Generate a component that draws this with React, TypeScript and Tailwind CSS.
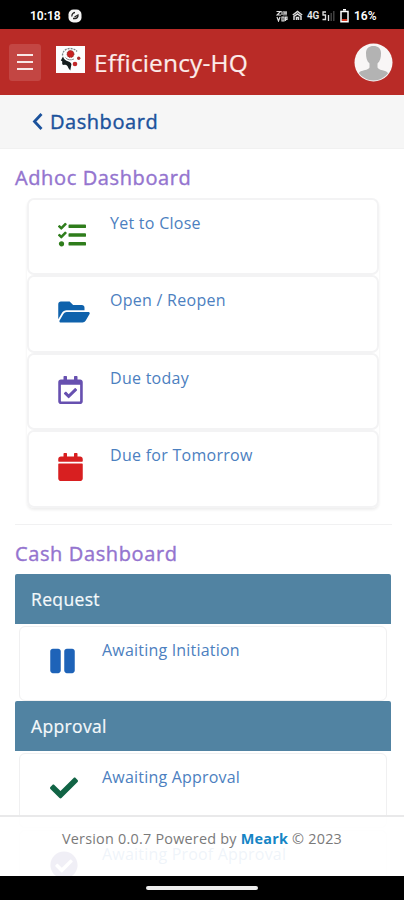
import React from 'react';
import {
  FaTasks,
  FaFolderOpen,
  FaRegCalendarCheck,
  FaCalendar,
  FaPause,
  FaCheck,
  FaCheckCircle,
} from 'react-icons/fa';

const adhocItems = [
  { label: 'Yet to Close', icon: <FaTasks className="w-[28px] h-[28px] text-[#2f7d1c]" /> },
  { label: 'Open / Reopen', icon: <FaFolderOpen className="w-[32px] h-[28px] text-[#0f62ac]" /> },
  { label: 'Due today', icon: <FaRegCalendarCheck className="w-[25px] h-[28px] text-[#6750b0]" /> },
  { label: 'Due for Tomorrow', icon: <FaCalendar className="w-[25px] h-[28px] text-[#d81f20]" /> },
];

const StatusBar: React.FC = () => (
  <div className="h-[29px] shrink-0 bg-black text-white flex items-center pl-[30px] pr-[27px] pt-[2px] font-['Roboto',sans-serif] text-[12px] font-semibold">
    <span className="w-[31px]">10:18</span>
    <svg className="ml-[7px]" width="14" height="14" viewBox="0 0 14 14">
      <rect x="0.5" y="0.5" width="13" height="13" rx="5" fill="#f4f4f4" />
      <path d="M4 7.500a3.200 3.200 0 0 1 3-4M5 9.500h2a3 3 0 0 0 3-3.500L6.500 8" fill="none" stroke="#222" strokeWidth="1.3" />
    </svg>
    <div className="ml-auto flex items-center">
      <svg width="12" height="12" viewBox="0 0 12 12" fill="none" stroke="#ddd" strokeWidth="1.2">
        <path d="M0.500 1.500h4L1 5h4M6 1.500v3.500M8 1v4.500M10 1v4.500M8 3h3M1 7l1.500 4L4 7M6 7h2v4H6zM9.500 11V7H11v2.500H9.500" />
      </svg>
      <svg className="ml-[4px]" width="11" height="11" viewBox="0 0 11 11" fill="none" stroke="#ddd" strokeWidth="1.500">
        <path d="M0.800 5 5.500 1.500 10.200 5M2 10V6.500L5.500 4 9 6.500V10M4.500 10V7.500h2V10" />
      </svg>
      <span className="ml-[4px] w-[12px] text-[10px] leading-none tracking-[-0.3px] text-[#e8e8e8]">4G</span>
      <svg className="ml-[3px]" width="13" height="12" viewBox="0 0 13 12" fill="none" strokeWidth="1.300">
        <path d="M4 2H1v3h2.500v4.500H0.500M6.500 5v6" stroke="#ddd" />
        <path d="M9.200 3v8M11.800 1v10" stroke="#4a4a4a" />
      </svg>
      <svg className="ml-[5px]" width="9" height="14" viewBox="0 0 9 14">
        <path d="M3 0.800h3M1 2.500h7v10.300H1z" fill="none" stroke="#fff" strokeWidth="1.500" />
        <rect x="2" y="10" width="5" height="2" fill="#d8361f" />
      </svg>
      <span className="ml-[5px] w-[23px] whitespace-nowrap">16%</span>
    </div>
  </div>
);

const Logo: React.FC = () => (
  <svg width="29" height="27" viewBox="0 0 29 27">
    <rect width="29" height="27" fill="#fdfdfd" />
    <path d="M7 10.500 4.800 14.500l1.400.8v2.500c0 1 .8 1.300 3 1 1.500.2 2.600 1.200 3.300 3.500l1.800 2.200.8-4.500c1-2-.2-3.800-2.600-4.500-3-.7-4.500-2-5.500-5z" fill="#151d1d" />
    <path d="M6.500 9.500C6.500 5 10 2.500 14 2.500c3 0 5.500 1 7 3" fill="none" stroke="#7b8688" strokeWidth="1.300" strokeDasharray="2 1" />
    <path d="M9.500 11.500c1.500 2.500 5.500 3 8.500 1.500" fill="none" stroke="#8b9597" strokeWidth="1" />
    <circle cx="14.500" cy="8" r="3.500" fill="#c82020" stroke="#81292a" strokeWidth="1" strokeDasharray="1 1" />
    <circle cx="22.700" cy="12.300" r="1.700" fill="#a92f30" />
    <circle cx="19" cy="18" r="2.300" fill="#c22829" />
  </svg>
);

const Avatar: React.FC = () => (
  <svg width="39" height="39" viewBox="0 0 39 39">
    <defs>
      <clipPath id="avatar">
        <circle cx="19.500" cy="19.500" r="18" />
      </clipPath>
    </defs>
    <circle cx="19.500" cy="19.500" r="19" fill="#f8f6f6" />
    <path
      clipPath="url(#avatar)"
      d="M12 10c0-4.500 3-7 7.500-7s7.500 2.500 7.500 7c0 4.500-.7 8-3.500 10.500v4c1 2 4 2.500 7.500 3.500 2.500.8 4 2.500 4 5.500V39h-31v-5.500c0-3 1-4.700 3.500-5.500 3.500-1 7-1.500 8-3.500v-4C12.700 18 12 14.500 12 10z"
      fill="#b3b3b3"
    />
  </svg>
);

interface RequestCardProps {
  label: string;
  icon: React.ReactNode;
}

const RequestCard: React.FC<RequestCardProps> = ({ label, icon }) => (
  <div className="mx-[4px] h-[75px] flex rounded-[6px] border border-[#f0f0f1] bg-white">
    <div className="w-[82px] pl-[30px] pt-[20px] shrink-0">{icon}</div>
    <span className="pt-[11px] text-[16px] leading-[24px] tracking-[0.2px] text-[#4c80c0] whitespace-nowrap">{label}</span>
  </div>
);

const SectionBar: React.FC<{ title: string }> = ({ title }) => (
  <div className="h-[50px] flex items-center rounded-t-[2px] bg-[#5183a2] pl-[16px] pt-px text-[17.500px] tracking-[0.35px] text-[#f5f9fb] [-webkit-text-stroke:0.2px]">
    {title}
  </div>
);

const App: React.FC = () => {
  return (
    <div className="w-[404px] h-[900px] overflow-hidden bg-white flex flex-col font-['Open_Sans',sans-serif]">
      <StatusBar />

      <header className="h-[66px] shrink-0 bg-[#b92b27] flex items-center pl-[9px] pr-[11px]">
        <button className="w-[32px] h-[37px] rounded-[3px] bg-[#c34643] flex flex-col items-center justify-center gap-[5px]">
          <span className="w-[16px] h-[2px] bg-[#f8e7e6]" />
          <span className="w-[16px] h-[2px] bg-[#f8e7e6]" />
          <span className="w-[16px] h-[2px] bg-[#f8e7e6]" />
        </button>
        <div className="ml-[15px] pb-[5px]">
          <Logo />
        </div>
        <h1 className="ml-[9px] pt-[2px] text-[24.500px] tracking-[0.15px] text-[#fcecea] whitespace-nowrap [-webkit-text-stroke:0.2px]">
          Efficiency-HQ
        </h1>
        <div className="ml-auto">
          <Avatar />
        </div>
      </header>

      <div className="h-[54px] shrink-0 bg-[#f6f6f6] border-b border-[#f1f1f1] flex items-center pl-[32px] text-[#1b529c]">
        <svg width="11" height="17" viewBox="0 0 11 17" fill="none" stroke="currentColor" strokeWidth="2.800">
          <path d="M9.500 1 2.500 8.500l7 7.500" />
        </svg>
        <span className="ml-[7px] text-[20px] font-medium tracking-[0.55px] [-webkit-text-stroke:0.4px]">Dashboard</span>
      </div>

      <div className="relative h-[727px] shrink-0 overflow-hidden">
        <main className="px-[15px]">
          <h2 className="pt-[14px] h-[49px] text-[20px] leading-[30px] font-medium tracking-[0.62px] text-[#9474cf] [-webkit-text-stroke:0.4px]">
            Adhoc Dashboard
          </h2>
          <div className="ml-[12px] w-[352px] rounded-[7px] shadow-[0_2px_3px_rgba(0,0,0,0.07)]">
            {adhocItems.map((item) => (
              <div key={item.label} className="h-[77.4px] flex rounded-[7px] border-2 border-[#f3f3f4] bg-white">
                <div className="w-[81px] pl-[29px] pt-[21px] shrink-0">{item.icon}</div>
                <span className="pt-[11px] text-[16px] leading-[24px] tracking-[0.27px] text-[#4c80c0] whitespace-nowrap">{item.label}</span>
              </div>
            ))}
          </div>

          <hr className="mt-[16px] w-[377px] border-[#f1f1f2]" />
          <h2 className="pt-[14px] h-[49px] text-[20px] leading-[30px] font-medium tracking-[0.62px] text-[#9474cf] [-webkit-text-stroke:0.4px]">
            Cash Dashboard
          </h2>

          <div className="w-[376px]">
            <SectionBar title="Request" />
            <div className="pt-[2px]">
              <RequestCard label="Awaiting Initiation" icon={<FaPause className="w-[25px] h-[28px] text-[#1e63b8]" />} />
            </div>
            <SectionBar title="Approval" />
            <div className="pt-[2px] flex flex-col gap-[2px]">
              <RequestCard label="Awaiting Approval" icon={<FaCheck className="w-[28px] h-[28px] text-[#116445]" />} />
              <RequestCard label="Awaiting Proof Approval" icon={<FaCheckCircle className="w-[28px] h-[28px] text-[#5b4b9a]" />} />
            </div>
          </div>
        </main>

        <footer className="absolute inset-x-0 bottom-0 h-[61px] border-t-2 border-[#e9e9ea] bg-white/91 pt-[11px] text-center text-[14.400px] leading-[22px] tracking-[0.23px] text-[#7a7a7a]">
          Version 0.0.7 Powered by <b className="text-[#1585c5]">Meark</b> © 2023
        </footer>
      </div>

      <div className="h-[24px] shrink-0 bg-black flex items-center justify-center">
        <div className="w-[112px] h-[4px] rounded-full bg-[#eeeeee]" />
      </div>
    </div>
  );
};

export default App;
